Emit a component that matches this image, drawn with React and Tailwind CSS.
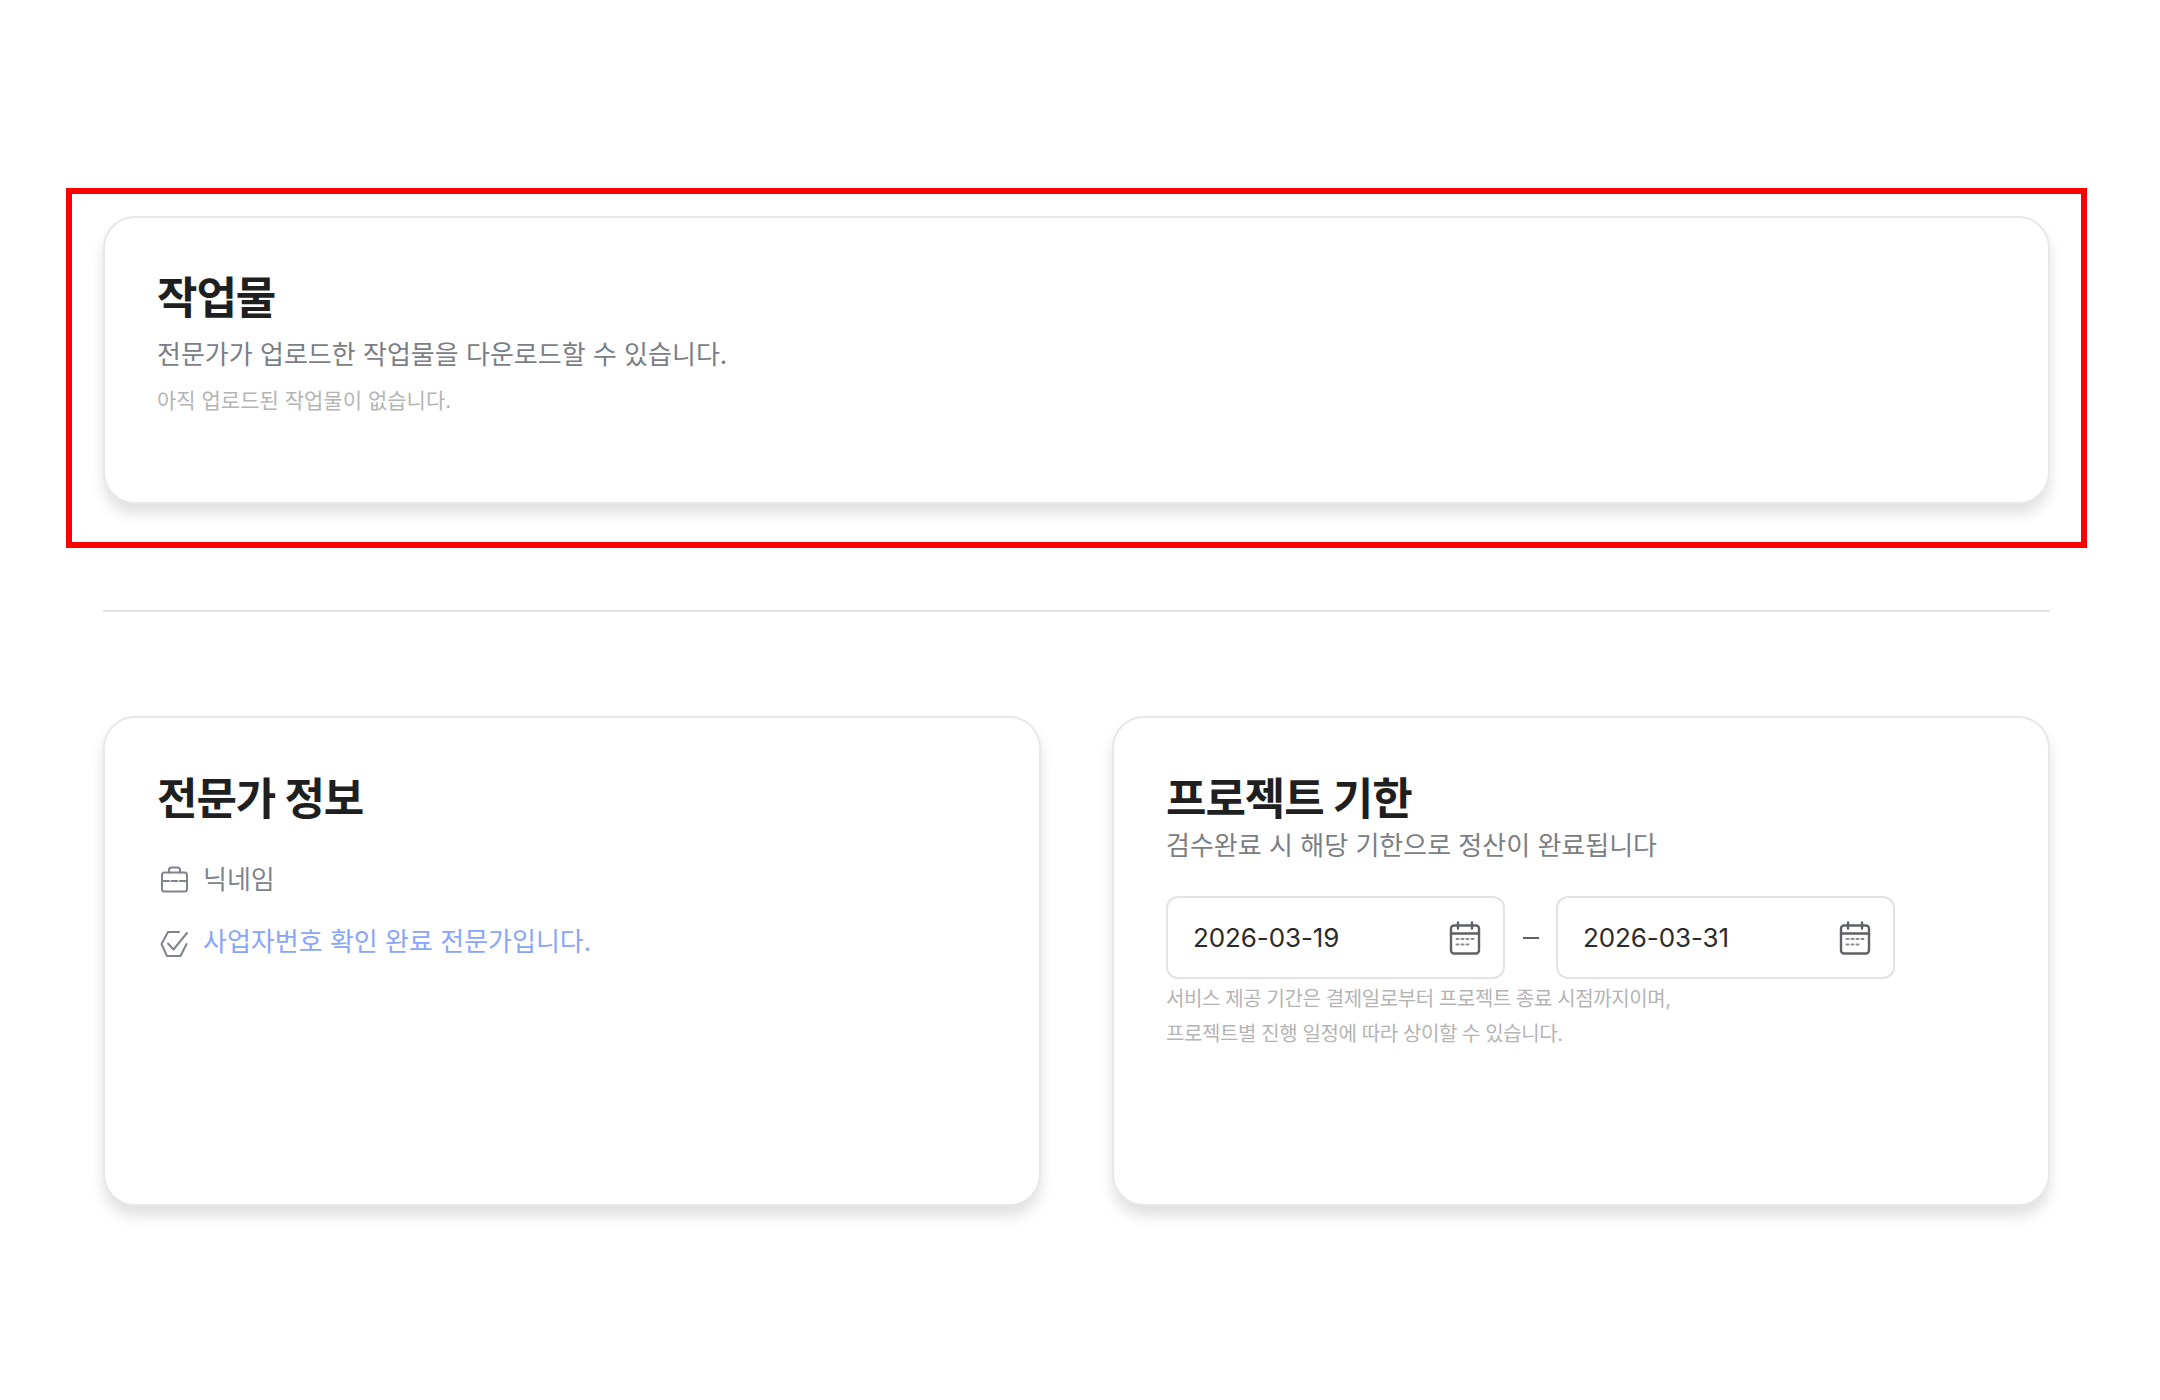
function Briefcase() {
  return (
    <svg className="mt-[2px]" width="32" height="32" viewBox="0 0 32 32" fill="none" stroke="#80848d" strokeWidth="2" strokeLinecap="round" strokeLinejoin="round">
      <rect x="5" y="7.5" width="25" height="19" rx="2.5" />
      <path d="M12 7.5V5a2.5 2.5 0 0 1 2.5-2.5h6A2.5 2.5 0 0 1 23 5v2.5" />
      <path d="M5 16h7M23 16h7M14.5 16h6" />
    </svg>
  );
}

function CheckBadge() {
  return (
    <svg className="mt-[4px]" width="32" height="32" viewBox="0 0 32 32" fill="none" stroke="#80848d" strokeWidth="2" strokeLinecap="round" strokeLinejoin="round">
      <path d="M22 4H11L4.5 16 10 28h13.5l6-12" />
      <path d="M11 15.5l5.5 6L30 5" />
    </svg>
  );
}

function Calendar() {
  return (
    <svg width="32" height="34" viewBox="0 0 32 34" fill="none" stroke="#5f6167" strokeLinecap="round" strokeLinejoin="round">
      <rect x="2" y="4.5" width="28" height="28" rx="3" strokeWidth="2.4" />
      <path d="M2 12.5h28" strokeWidth="2.4" />
      <path d="M9 1.5v6M23 1.5v6" strokeWidth="2.4" />
      <path d="M7.5 18h2M12.5 18h2M17.5 18h2M22.5 18h2M7.5 23.5h2M12.5 23.5h2M17.5 23.5h2" strokeWidth="2" stroke="#8a8c92" />
    </svg>
  );
}

function DateBox({ value }) {
  return (
    <div className="flex h-[83px] w-[339px] items-center justify-between rounded-[12px] border-2 border-[#e3e3e3] bg-white pl-[25px] pr-[22px]">
      <span className="text-[26px] leading-none tracking-[-0.1px] text-[#2b2b2b]">{value}</span>
      <Calendar />
    </div>
  );
}

export default function App() {
  return (
    <div className="min-h-[1400px] bg-white pt-[188px] pl-[66px] pr-[73px] font-['Inter','Noto_Sans_CJK_KR',sans-serif]">
      <div className="h-[360px] border-[6px] border-[#ff0000] pl-[31px] pr-[31px] pt-[22px]">
        <div className="h-[288px] rounded-[32px] border-2 border-[#e8e8e8] bg-white pl-[52px] pr-[51px] pt-[54px] shadow-[0_10px_14px_rgba(0,0,0,0.12)]">
          <h2 className="text-[44px] font-bold leading-[52px] tracking-[-1.1px] text-[#1f1f1f]">작업물</h2>
          <p className="mt-[12px] text-[26px] leading-[38px] text-[#7b7e85]">전문가가 업로드한 작업물을 다운로드할 수 있습니다.</p>
          <p className="mt-[12px] text-[21px] leading-[30px] text-[#b4b4b4]">아직 업로드된 작업물이 없습니다.</p>
        </div>
      </div>

      <div className="ml-[37px] mr-[37px] mt-[62px] h-[2px] bg-[#e4e4e4]" />

      <div className="ml-[37px] mr-[37px] mt-[104px] grid grid-cols-2 gap-[71px]">
        <div className="h-[490px] rounded-[32px] border-2 border-[#e8e8e8] bg-white pl-[52px] pr-[51px] pt-[55px] shadow-[0_10px_14px_rgba(0,0,0,0.12)]">
          <h2 className="text-[44px] font-bold leading-[52px] tracking-[-1.1px] text-[#1f1f1f]">전문가 정보</h2>
          <div className="mt-[36px] flex items-center gap-[14px]">
            <Briefcase />
            <span className="text-[26px] leading-[38px] text-[#80848d]">닉네임</span>
          </div>
          <div className="mt-[24px] flex items-center gap-[14px]">
            <CheckBadge />
            <span className="text-[26px] leading-[38px] text-[#89a5fb]">사업자번호 확인 완료 전문가입니다.</span>
          </div>
        </div>

        <div className="h-[490px] rounded-[32px] border-2 border-[#e8e8e8] bg-white pl-[52px] pr-[51px] pt-[55px] shadow-[0_10px_14px_rgba(0,0,0,0.12)]">
          <h2 className="text-[44px] font-bold leading-[52px] tracking-[-1.1px] text-[#1f1f1f]">프로젝트 기한</h2>
          <p className="mt-[2px] text-[26px] leading-[38px] text-[#7b7e85]">검수완료 시 해당 기한으로 정산이 완료됩니다</p>
          <div className="mt-[31px] flex items-center">
            <DateBox value="2026-03-19" />
            <div className="flex w-[51px] justify-center">
              <div className="h-[2px] w-[16px] bg-[#5f6167]" />
            </div>
            <DateBox value="2026-03-31" />
          </div>
          <p className="mt-[3px] text-[20px] leading-[35px] tracking-[-0.4px] text-[#b4b4b4]">
            서비스 제공 기간은 결제일로부터 프로젝트 종료 시점까지이며,
            <br />
            프로젝트별 진행 일정에 따라 상이할 수 있습니다.
          </p>
        </div>
      </div>
    </div>
  );
}
